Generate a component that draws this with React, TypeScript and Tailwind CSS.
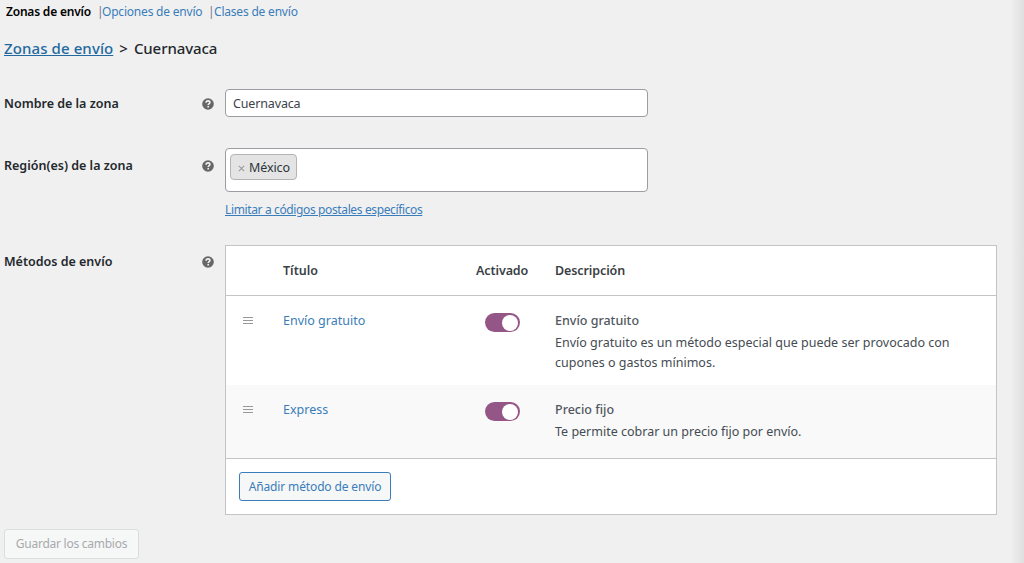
import React from 'react'

const methods = [
    {
        title: 'Envío gratuito',
        name: 'Envío gratuito',
        description: ['Envío gratuito es un método especial que puede ser provocado con', 'cupones o gastos mínimos.'],
        row: 'h-[89px] bg-white',
    },
    {
        title: 'Express',
        name: 'Precio fijo',
        description: ['Te permite cobrar un precio fijo por envío.'],
        row: 'h-[73px] bg-[#f9f9f9]',
    },
]

const HelpTip = () => (
    <svg className="w-3 h-3 shrink-0" viewBox="0 0 12 12">
        <circle cx="6" cy="6" r="5.8" fill="#666" />
        <path d="M4.1 4.7C4.1 3.5 4.9 2.9 6 2.9s1.9.6 1.9 1.6C7.9 5.7 6.2 5.7 6.2 7.1" fill="none" stroke="#f0f0f1" strokeWidth="1.6" />
        <rect x="5.4" y="7.9" width="1.6" height="1.6" fill="#f0f0f1" />
    </svg>
)

const Label = ({ text }: { text: string }) => (
    <div className="w-[225px] h-5 shrink-0 pl-1 pr-[11px] flex items-center justify-between font-semibold text-[#23282d]">
        <span>{text}</span>
        <HelpTip />
    </div>
)

const Toggle = () => (
    <button className="w-[35px] h-[19px] rounded-full bg-[#935687] flex items-center justify-end pr-[2px] cursor-pointer">
        <span className="w-[16px] h-[16px] rounded-full bg-white"></span>
    </button>
)

const Handle = () => (
    <svg className="w-[10px] h-[9px]" viewBox="0 0 10 9">
        <path d="M0 1.5h10M0 4.5h10M0 7.5h10" stroke="#999" strokeWidth="1" />
    </svg>
)

const App = () => {
    return (
        <div className="relative w-[1024px] h-[563px] overflow-hidden bg-[#f0f0f0] font-['Noto_Sans','Open_Sans',sans-serif] text-[12.5px] leading-5 text-[#444b52] whitespace-nowrap">
            <nav className="h-6 pl-[6px] flex items-center text-[12px] tracking-[-0.2px]">
                <a className="w-[91px] font-semibold text-black">Zonas de envío</a>
                <span className="w-[5px] text-[#777]">|</span>
                <a className="w-[106px] text-[#3a7dbb]">Opciones de envío</a>
                <span className="w-[6px] text-[#777]">|</span>
                <a className="text-[#3a7dbb]">Clases de envío</a>
            </nav>

            <h2 className="h-12 pl-1 flex items-center gap-[6px] text-[15px] font-medium text-[#23282d]">
                <a className="underline text-[#22699f] tracking-[0.1px]">Zonas de envío</a>
                <span>&gt;</span>
                <span className="tracking-[-0.1px]">Cuernavaca</span>
            </h2>

            <div className="mt-[17px] h-[59px] flex items-start">
                <div className="mt-[5px]"><Label text="Nombre de la zona" /></div>
                <input className="w-[423px] h-[28px] px-[7px] rounded-[4px] border border-[#9a9da2] bg-white text-[#3c434a] tracking-[-0.15px] outline-none" defaultValue="Cuernavaca" />
            </div>

            <div className="h-[97px] flex items-start">
                <div className="mt-[8px]"><Label text="Región(es) de la zona" /></div>
                <div>
                    <div className="w-[423px] h-[44px] p-[5px] pl-[4px] rounded-[4px] border border-[#9a9da2] bg-white">
                        <span className="inline-flex h-[26px] w-[67px] items-center gap-[4px] rounded-[4px] border border-[#b4b4b4] bg-[#e4e4e4] pl-[7px] text-[#2c3338]">
                            <svg className="w-[7px] h-[7px] mt-[3px] shrink-0" viewBox="0 0 8 8"><path d="M1 1l6 6M7 1L1 7" stroke="#999" strokeWidth="1.2" /></svg>
                            <span className="pt-px tracking-[-0.1px]">México</span>
                        </span>
                    </div>
                    <a className="mt-[8px] block text-[12px] tracking-[-0.37px] underline text-[#3a7dbb]">Limitar a códigos postales específicos</a>
                </div>
            </div>

            <div className="flex items-start">
                <div className="mt-[7px]"><Label text="Métodos de envío" /></div>
                <div className="w-[772px] h-[270px] border border-[#c3c4c7] bg-white">
                    <div className="h-[50px] flex items-center border-b border-[#c3c4c7] font-semibold text-[#3a3f45]">
                        <span className="w-[57px]"></span>
                        <span className="w-[193px]">Título</span>
                        <span className="w-[79px] tracking-[-0.1px]">Activado</span>
                        <span className="tracking-[-0.1px]">Descripción</span>
                    </div>
                    {methods.map((method) => (
                        <div key={method.title} className={`flex items-start pt-[15px] ${method.row}`}>
                            <div className="w-[57px] pl-[17px] pt-[5px]"><Handle /></div>
                            <a className="w-[202px] text-[#3a7dbb] cursor-pointer">{method.title}</a>
                            <div className="w-[70px] pt-[2px]"><Toggle /></div>
                            <div>
                                <p className="mb-[2px] font-medium text-[#50575e]">{method.name}</p>
                                {method.description.map((line) => (
                                    <p key={line}>{line}</p>
                                ))}
                            </div>
                        </div>
                    ))}
                    <div className="h-[56px] pl-[13px] pt-[13px] border-t border-[#c3c4c7]">
                        <button className="w-[152px] h-[29px] rounded-[3px] border border-[#3a7dbb] bg-[#f6f7f7] text-[12px] tracking-[-0.14px] text-[#3a7dbb] cursor-pointer">Añadir método de envío</button>
                    </div>
                </div>
            </div>

            <button className="mt-[14px] ml-[4px] block w-[135px] h-[30px] rounded-[3px] border border-[#dcdcde] bg-[#f6f7f7] text-[12px] tracking-[-0.26px] text-[#a7aaad]" disabled>Guardar los cambios</button>

            <div className="absolute right-0 top-0 w-[14px] h-full bg-gradient-to-r from-[#f0f0f0] to-[#dfdfdf]"></div>
        </div>
    )
}

export default App
